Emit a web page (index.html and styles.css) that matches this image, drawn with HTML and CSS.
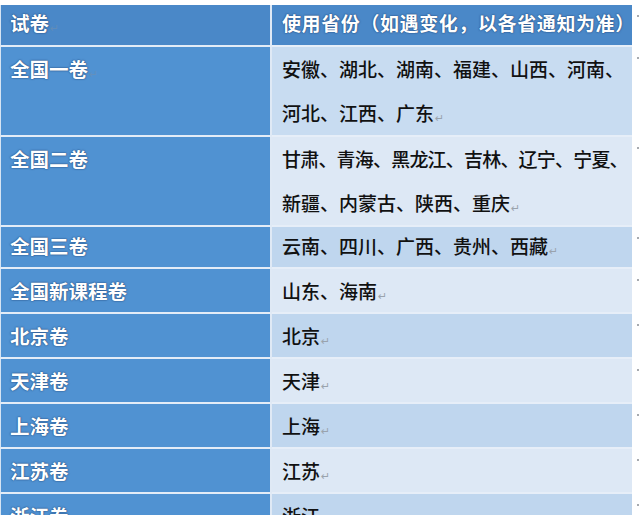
FILE: index.html
```html
<!DOCTYPE html>
<html lang="zh-CN">
<head>
<meta charset="utf-8">
<title>试卷使用省份</title>
<link rel="stylesheet" href="styles.css">
</head>
<body>
<div class="sheet">
  <div class="row head">
    <div class="lc">试卷<span class="pm faint">↵</span></div>
    <div class="rc">使用省份（如遇变化，以各省通知为准）</div>
    <div class="mark"></div>
  </div>
  <div class="row dbl">
    <div class="lc">全国一卷<span class="pm faint">↵</span></div>
    <div class="rc mid">安徽、湖北、湖南、福建、山西、河南、<br>河北、江西、广东<span class="pm">↵</span></div>
    <div class="mark"></div>
  </div>
  <div class="row dbl">
    <div class="lc">全国二卷</div>
    <div class="rc light"><span class="tight">甘肃、青海、黑龙江、吉林、辽宁、宁夏、</span><br>新疆、内蒙古、陕西、重庆<span class="pm">↵</span></div>
    <div class="mark"></div>
  </div>
  <div class="row short">
    <div class="lc">全国三卷</div>
    <div class="rc dark">云南、四川、广西、贵州、西藏<span class="pm">↵</span></div>
    <div class="mark"></div>
  </div>
  <div class="row">
    <div class="lc">全国新课程卷</div>
    <div class="rc light">山东、海南<span class="pm">↵</span></div>
    <div class="mark"></div>
  </div>
  <div class="row">
    <div class="lc">北京卷</div>
    <div class="rc dark">北京<span class="pm">↵</span></div>
    <div class="mark"></div>
  </div>
  <div class="row">
    <div class="lc">天津卷</div>
    <div class="rc light">天津<span class="pm">↵</span></div>
    <div class="mark"></div>
  </div>
  <div class="row">
    <div class="lc">上海卷</div>
    <div class="rc dark">上海<span class="pm">↵</span></div>
    <div class="mark"></div>
  </div>
  <div class="row">
    <div class="lc">江苏卷</div>
    <div class="rc light">江苏<span class="pm">↵</span></div>
    <div class="mark"></div>
  </div>
  <div class="row">
    <div class="lc">浙江卷</div>
    <div class="rc dark">浙江<span class="pm">↵</span></div>
    <div class="mark"></div>
  </div>
</div>
</body>
</html>
```
FILE: styles.css
```css
html, body {
  margin: 0;
  padding: 0;
  background: #ffffff;
}

body {
  width: 640px;
  height: 515px;
  overflow: hidden;
  font-family: "Noto Sans CJK SC", "Noto Sans", sans-serif;
}

.sheet {
  padding-top: 5px;
  display: flex;
  flex-direction: column;
}

.row {
  display: flex;
}

.lc {
  width: 260px;
  padding-left: 9px;
  border-left: 1px solid #d6e4f3;
  border-right: 2px solid #dfe9f5;
  border-bottom: 2px solid #e3ecf7;
  background: #5092d2;
  color: #ffffff;
  font-weight: 700;
  font-size: 19.5px;
  line-height: 43px;
  height: 43px;
  text-shadow: 0 0 2px rgba(25, 60, 110, 0.75), 0 0 1px rgba(25, 60, 110, 0.8);
}

.rc {
  width: 350px;
  padding-left: 10px;
  border-bottom: 2px solid #e6eef8;
  color: #111111;
  font-size: 19px;
  font-weight: 500;
  line-height: 43px;
  height: 43px;
  white-space: nowrap;
}

.rc.dark {
  background: #bfd6ee;
}

.rc.mid {
  background: #c8dcf1;
}

.rc.light {
  background: #dde8f5;
}

.head .lc,
.head .rc {
  height: 40px;
  line-height: 36px;
  background: #4a88c8;
}

.head .rc {
  color: #ffffff;
  font-weight: 700;
  letter-spacing: 0.6px;
  text-shadow: 0 0 2px rgba(25, 60, 110, 0.75), 0 0 1px rgba(25, 60, 110, 0.8);
}

.dbl .lc,
.dbl .rc {
  height: 88px;
  line-height: 44px;
}

.short .lc,
.short .rc {
  height: 40px;
  line-height: 38px;
}

.tight {
  letter-spacing: -0.8px;
}

.pm {
  font-family: "DejaVu Sans", sans-serif;
  font-size: 11px;
  font-weight: 400;
  color: #9aa3ad;
  text-shadow: none;
  margin-left: 1px;
  vertical-align: -1px;
}

.pm.faint {
  color: #6f8fb0;
  opacity: 0.6;
}

.mark {
  flex: 1;
  position: relative;
}

.mark::before {
  content: "";
  position: absolute;
  left: 5px;
  top: 10px;
  width: 2px;
  height: 2px;
  border-radius: 1px;
  background: #8a8f96;
}
```
